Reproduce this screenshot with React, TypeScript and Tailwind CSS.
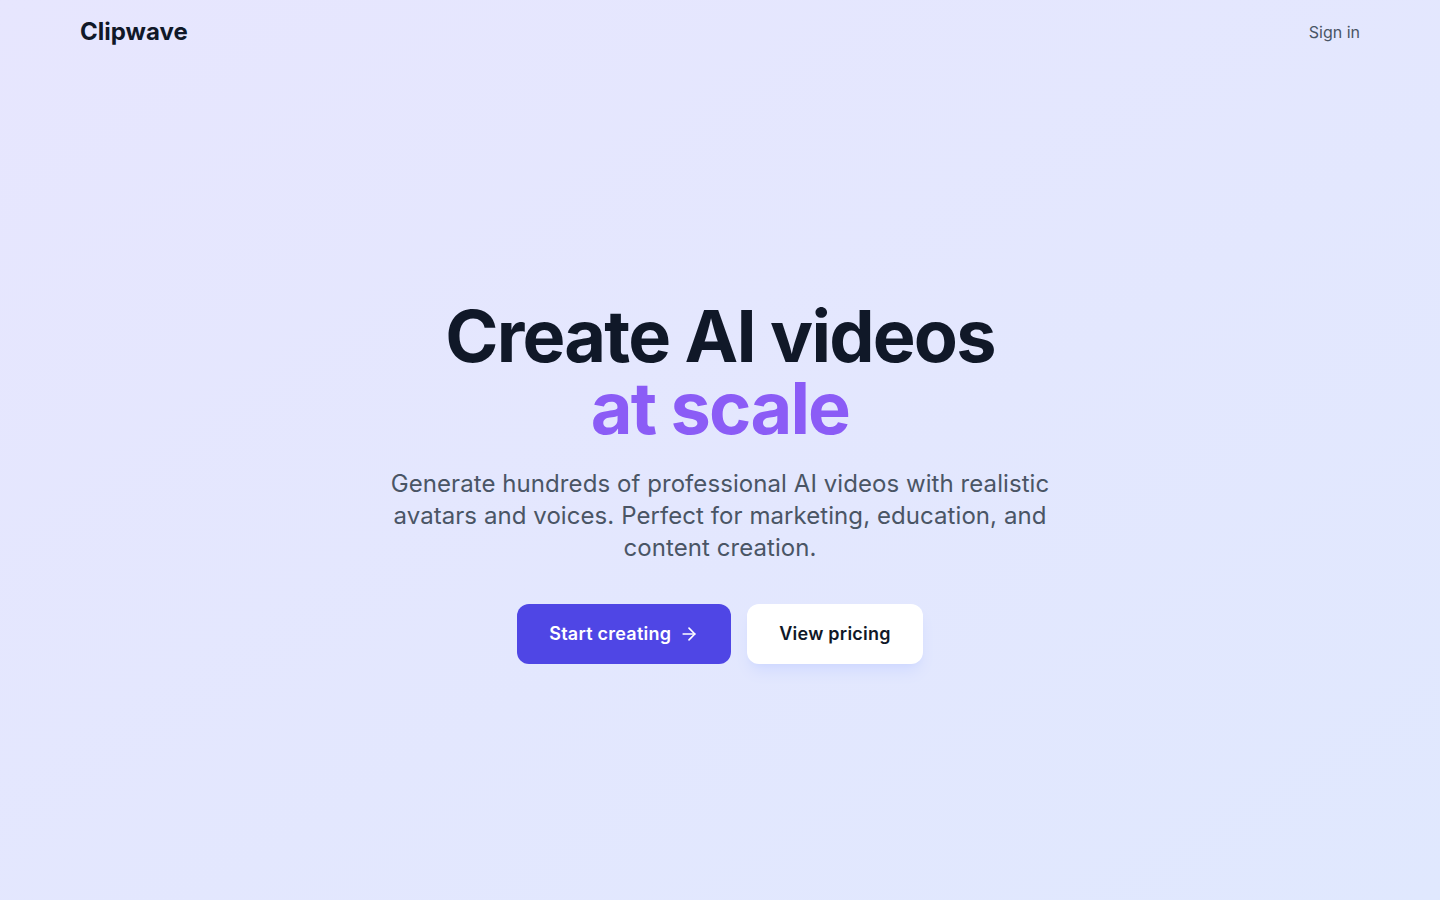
import { ArrowRight } from 'lucide-react';

export default function App() {
    return (
        <div
            className="min-h-screen flex flex-col bg-gradient-to-br from-[#e7e6fe] to-[#e0e8fe] text-gray-900"
            style={{ fontFamily: 'Inter, "Noto Sans", sans-serif' }}
        >
            <header className="h-16 flex items-center justify-between px-20">
                <div className="text-2xl font-bold text-gray-900">Clipwave</div>
                <a href="#" className="text-base text-gray-600">Sign in</a>
            </header>

            <main className="flex-1 flex flex-col items-center justify-center text-center px-6">
                <h1 className="text-7xl font-bold tracking-tight leading-none text-gray-900">
                    Create AI videos
                    <br />
                    <span className="text-[#8b5cf6]">at scale</span>
                </h1>
                <p className="mt-6 max-w-2xl text-2xl leading-8 tracking-[0.07px] text-gray-600">
                    Generate hundreds of professional AI videos with realistic avatars and voices. Perfect for marketing, education, and content creation.
                </p>
                <div className="mt-10 flex items-center gap-4">
                    <button className="h-[60px] px-8 rounded-xl bg-[#4f46e5] text-white text-lg font-semibold tracking-[0.25px] flex items-center gap-2">
                        Start creating
                        <ArrowRight className="w-5 h-5" strokeWidth={2} />
                    </button>
                    <button className="h-[60px] px-8 rounded-xl bg-white text-gray-900 text-lg font-semibold tracking-[0.25px] shadow-lg shadow-indigo-200/60">
                        View pricing
                    </button>
                </div>
            </main>
        </div>
    );
}
